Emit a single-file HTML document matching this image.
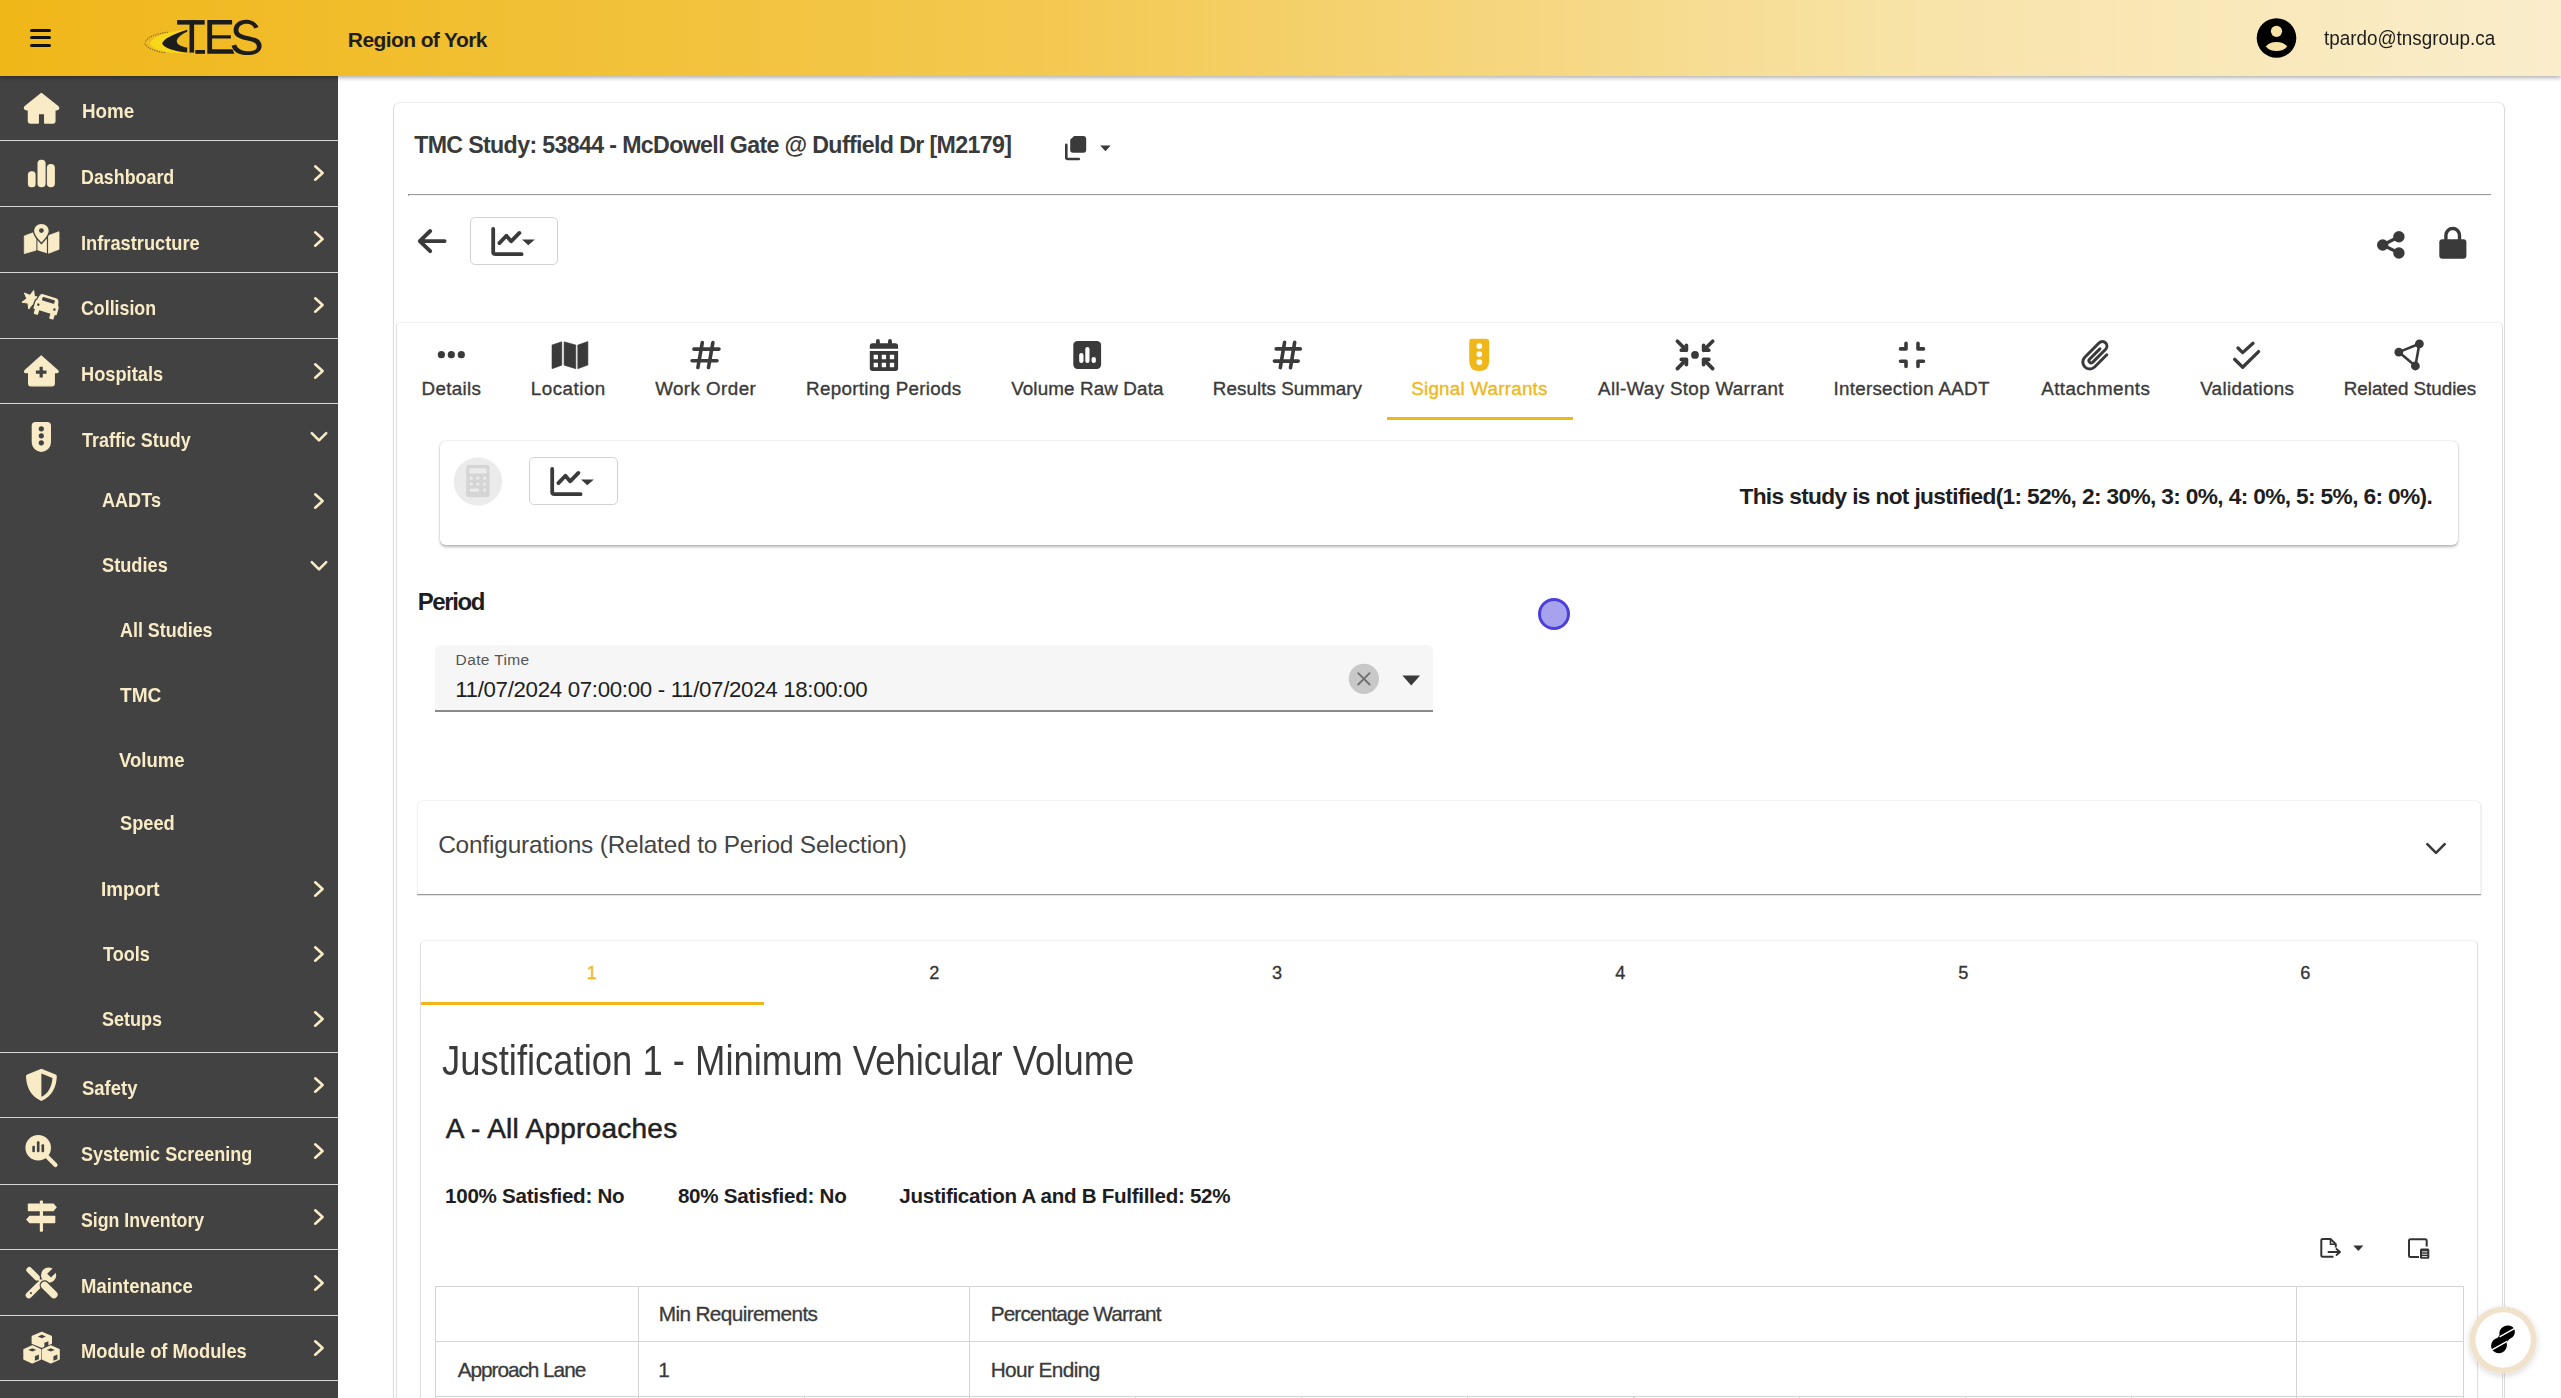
<!DOCTYPE html>
<html><head><meta charset="utf-8">
<style>
*{box-sizing:border-box;margin:0;padding:0}
html,body{width:2561px;height:1398px;overflow:hidden;background:#fff;font-family:"Liberation Sans",sans-serif}
.a{position:absolute}
.t{position:absolute;white-space:nowrap;line-height:1;z-index:20}
svg{position:absolute;overflow:visible}
</style></head><body>
<div class="a" style="left:0;top:0;width:2561px;height:76px;background:linear-gradient(90deg,#F0B719 0%,#F3C84E 40%,#F8E3A8 75%,#FAEDCB 100%);box-shadow:0 1.5px 4px rgba(0,0,0,.3);z-index:10"></div>
<div class="a" style="left:30px;top:29px;width:21px;height:3px;background:#111;border-radius:2px;z-index:11"></div>
<div class="a" style="left:30px;top:36.4px;width:21px;height:3px;background:#111;border-radius:2px;z-index:11"></div>
<div class="a" style="left:30px;top:43.8px;width:21px;height:3px;background:#111;border-radius:2px;z-index:11"></div>
<svg style="left:0;top:0;z-index:11" width="300" height="76" viewBox="0 0 300 76">
<path d="M150,43.5 C152,37.5 163,32 187.2,29.7 C172,34 164,38.5 162.1,43.4 C164,48.5 174,51.5 187.2,53.2 C166,53.5 151.5,49.5 150,43.5 Z" fill="#F8D81A"/>
<path d="M145.5,41.5 C148,37 156,33.5 168,32.3 M144.8,43.5 C147,48.5 155,51.5 166,52.8" stroke="#2a2a2a" stroke-width="1.1" fill="none" stroke-dasharray="1.3 1.1" opacity=".55"/>
<path d="M187.2,29.8 C172,34.5 164,39 162.1,43.4 C164.5,48 174,51 187.2,52.6 L187.2,47.6 C181,46.5 177,44.5 176.8,41.5 C176.8,38.5 180.5,34.5 187.2,31.8 Z" fill="#1c1c1c"/>
<rect x="177.1" y="20.1" width="27.6" height="4.5" fill="#1c1c1c"/>
<rect x="189.5" y="20.1" width="4.6" height="32.5" fill="#1c1c1c"/>
<rect x="195.3" y="50" width="9.7" height="3.8" fill="#1c1c1c"/>
<path d="M207.3,20.1 H232.1 V24.4 H212.1 V35.3 H230.9 V38.6 H212.1 V49.3 H232.5 L234.4,53.8 H207.3 Z" fill="#1c1c1c"/>
<path d="M258.6,27 C256,22 251,19.8 246.5,19.8 C238.5,19.8 233.6,24.2 233.6,30.2 C233.6,36.8 239.5,38.6 246.5,40.2 C253,41.7 256.9,42.8 256.9,46.8 C256.9,50.3 252.8,51.2 247.5,51.2 C241.5,51.2 237.2,48.4 236.2,44.5 L231.6,45.8 C233,51.8 239,55.1 247.5,55.1 C256.5,55.1 261.6,51.2 261.6,46.3 C261.6,39.5 256,37.8 248.5,36.2 C242,34.8 238.4,33.7 238.4,30 C238.4,26 242.3,23.7 246.5,23.7 C250.5,23.7 253.2,25.6 254.3,28.6 Z" fill="#1c1c1c"/>
</svg>
<svg style="left:2256px;top:18px;z-index:11" width="41" height="40" viewBox="0 0 40 40">
<circle cx="20" cy="20" r="19.8" fill="#000"/>
<circle cx="20" cy="13.3" r="5.6" fill="#F7E3A8"/>
<path d="M9.3,28.2 C12,25.5 15.5,24 20,24 C24.5,24 28,25.5 30.7,28.2 C28.5,31.5 24.5,33 20,33 C15.5,33 11.5,31.5 9.3,28.2 Z" fill="#F7E3A8"/>
</svg>
<div class="a" style="left:0;top:76px;width:338px;height:1322px;background:#424242;z-index:5"></div>
<div class="a" style="left:0;top:140px;width:338px;height:1px;background:#d6d6d6;z-index:6"></div>
<div class="a" style="left:0;top:206px;width:338px;height:1px;background:#d6d6d6;z-index:6"></div>
<div class="a" style="left:0;top:272px;width:338px;height:1px;background:#d6d6d6;z-index:6"></div>
<div class="a" style="left:0;top:338px;width:338px;height:1px;background:#d6d6d6;z-index:6"></div>
<div class="a" style="left:0;top:403px;width:338px;height:1px;background:#d6d6d6;z-index:6"></div>
<div class="a" style="left:0;top:1052px;width:338px;height:1px;background:#d6d6d6;z-index:6"></div>
<div class="a" style="left:0;top:1117px;width:338px;height:1px;background:#d6d6d6;z-index:6"></div>
<div class="a" style="left:0;top:1184px;width:338px;height:1px;background:#d6d6d6;z-index:6"></div>
<div class="a" style="left:0;top:1249px;width:338px;height:1px;background:#d6d6d6;z-index:6"></div>
<div class="a" style="left:0;top:1315px;width:338px;height:1px;background:#d6d6d6;z-index:6"></div>
<div class="a" style="left:0;top:1380px;width:338px;height:1px;background:#d6d6d6;z-index:6"></div>
<svg style="left:312px;top:164.3px;z-index:8" width="16" height="18" viewBox="0 0 16 18"><path d="M3.2,2.3 L10.6,9 L3.2,15.7" stroke="#F8EBC6" stroke-width="2.6" fill="none" stroke-linecap="round" stroke-linejoin="round"/></svg>
<svg style="left:312px;top:230.2px;z-index:8" width="16" height="18" viewBox="0 0 16 18"><path d="M3.2,2.3 L10.6,9 L3.2,15.7" stroke="#F8EBC6" stroke-width="2.6" fill="none" stroke-linecap="round" stroke-linejoin="round"/></svg>
<svg style="left:312px;top:296.0px;z-index:8" width="16" height="18" viewBox="0 0 16 18"><path d="M3.2,2.3 L10.6,9 L3.2,15.7" stroke="#F8EBC6" stroke-width="2.6" fill="none" stroke-linecap="round" stroke-linejoin="round"/></svg>
<svg style="left:312px;top:361.8px;z-index:8" width="16" height="18" viewBox="0 0 16 18"><path d="M3.2,2.3 L10.6,9 L3.2,15.7" stroke="#F8EBC6" stroke-width="2.6" fill="none" stroke-linecap="round" stroke-linejoin="round"/></svg>
<svg style="left:312px;top:492.3px;z-index:8" width="16" height="18" viewBox="0 0 16 18"><path d="M3.2,2.3 L10.6,9 L3.2,15.7" stroke="#F8EBC6" stroke-width="2.6" fill="none" stroke-linecap="round" stroke-linejoin="round"/></svg>
<svg style="left:312px;top:880.0px;z-index:8" width="16" height="18" viewBox="0 0 16 18"><path d="M3.2,2.3 L10.6,9 L3.2,15.7" stroke="#F8EBC6" stroke-width="2.6" fill="none" stroke-linecap="round" stroke-linejoin="round"/></svg>
<svg style="left:312px;top:945.0px;z-index:8" width="16" height="18" viewBox="0 0 16 18"><path d="M3.2,2.3 L10.6,9 L3.2,15.7" stroke="#F8EBC6" stroke-width="2.6" fill="none" stroke-linecap="round" stroke-linejoin="round"/></svg>
<svg style="left:312px;top:1010.0px;z-index:8" width="16" height="18" viewBox="0 0 16 18"><path d="M3.2,2.3 L10.6,9 L3.2,15.7" stroke="#F8EBC6" stroke-width="2.6" fill="none" stroke-linecap="round" stroke-linejoin="round"/></svg>
<svg style="left:312px;top:1076.0px;z-index:8" width="16" height="18" viewBox="0 0 16 18"><path d="M3.2,2.3 L10.6,9 L3.2,15.7" stroke="#F8EBC6" stroke-width="2.6" fill="none" stroke-linecap="round" stroke-linejoin="round"/></svg>
<svg style="left:312px;top:1142.2px;z-index:8" width="16" height="18" viewBox="0 0 16 18"><path d="M3.2,2.3 L10.6,9 L3.2,15.7" stroke="#F8EBC6" stroke-width="2.6" fill="none" stroke-linecap="round" stroke-linejoin="round"/></svg>
<svg style="left:312px;top:1208.1px;z-index:8" width="16" height="18" viewBox="0 0 16 18"><path d="M3.2,2.3 L10.6,9 L3.2,15.7" stroke="#F8EBC6" stroke-width="2.6" fill="none" stroke-linecap="round" stroke-linejoin="round"/></svg>
<svg style="left:312px;top:1273.5px;z-index:8" width="16" height="18" viewBox="0 0 16 18"><path d="M3.2,2.3 L10.6,9 L3.2,15.7" stroke="#F8EBC6" stroke-width="2.6" fill="none" stroke-linecap="round" stroke-linejoin="round"/></svg>
<svg style="left:312px;top:1339.0px;z-index:8" width="16" height="18" viewBox="0 0 16 18"><path d="M3.2,2.3 L10.6,9 L3.2,15.7" stroke="#F8EBC6" stroke-width="2.6" fill="none" stroke-linecap="round" stroke-linejoin="round"/></svg>
<svg style="left:310px;top:427.9px;z-index:8" width="18" height="18" viewBox="0 0 18 18"><path d="M1.8,5.2 L9,12.4 L16.2,5.2" stroke="#F8EBC6" stroke-width="2.6" fill="none" stroke-linecap="round" stroke-linejoin="round"/></svg>
<svg style="left:310px;top:556.6px;z-index:8" width="18" height="18" viewBox="0 0 18 18"><path d="M1.8,5.2 L9,12.4 L16.2,5.2" stroke="#F8EBC6" stroke-width="2.6" fill="none" stroke-linecap="round" stroke-linejoin="round"/></svg>
<svg style="left:0;top:0;z-index:8" width="338" height="1398" viewBox="0 0 338 1398">
<!-- home -->
<path d="M41.4,93.5 L25.2,106.6 Q23.5,108.5 26,109.6 L28.5,110 L28.5,121 Q28.5,123 30.5,123 L38.2,123 L38.2,113.5 L44.8,113.5 L44.8,123 L52.8,123 Q54.8,123 54.8,121 L54.8,110 L57.3,109.6 Q59.6,108.5 57.8,106.6 Z" fill="#F8EBC6" stroke="#F8EBC6" stroke-width="1.5" stroke-linejoin="round"/>
<!-- dashboard bars -->
<rect x="27.9" y="171.2" width="7.7" height="16.1" rx="3.5" fill="#F8EBC6"/>
<rect x="37.5" y="159.7" width="8.1" height="27.6" rx="3.8" fill="#F8EBC6"/>
<rect x="46.9" y="163.9" width="8" height="23.4" rx="3.8" fill="#F8EBC6"/>
<!-- infrastructure map + pin -->
<path d="M24.3,236 L34.3,232.3 L36,236 L36,250.2 L24.3,253.6 Z" fill="#F8EBC6" stroke="#F8EBC6" stroke-width=".8" stroke-linejoin="round"/>
<path d="M37.4,238.5 L41.4,244.2 L45.4,238.5 L46.9,238.5 L46.9,253.3 L37.4,250.3 Z" fill="#F8EBC6"/>
<path d="M48.5,235.6 L59,231.7 L59,249.3 L48.5,253.3 Z" fill="#F8EBC6" stroke="#F8EBC6" stroke-width=".8" stroke-linejoin="round"/>
<path d="M41.4,223.2 C46,223.2 49.4,226.6 49.4,230.8 C49.4,235 44.5,240.5 41.4,243.6 C38.3,240.5 33.4,235 33.4,230.8 C33.4,226.6 36.8,223.2 41.4,223.2 Z" fill="#F8EBC6" stroke="#424242" stroke-width="1.4"/>
<circle cx="41.4" cy="230.6" r="2.4" fill="#424242"/>
<!-- collision -->
<path d="M33.68,290.53 L34.45,296.55 L40.47,297.32 L35.64,300.99 L37.99,306.59 L32.39,304.24 L28.72,309.07 L27.95,303.05 L21.93,302.28 L26.76,298.61 L24.41,293.01 L30.01,295.36 Z" fill="#F8EBC6" stroke="#F8EBC6" stroke-width="1" stroke-linejoin="round"/>
<g transform="rotate(17 47 305)">
<path d="M39.5,295.2 L53.5,295.2 Q56.8,295.2 57.6,298.5 L58.6,302.5 Q59.8,303.5 59.8,305.5 L59.8,311.5 Q59.8,313 58.3,313 L58,313 L58,316.2 Q58,318 56.2,318 L54,318 Q52.2,318 52.2,316.2 L52.2,313 L41.8,313 L41.8,316.2 Q41.8,318 40,318 L37.8,318 Q36,318 36,316.2 L36,313 L35.7,313 Q34.2,313 34.2,311.5 L34.2,305.5 Q34.2,303.5 35.4,302.5 L36.4,298.5 Q37.2,295.2 39.5,295.2 Z" fill="#F8EBC6" stroke="#424242" stroke-width="1.3"/>
<rect x="40.6" y="298.3" width="12.8" height="3.6" rx=".8" fill="#424242"/>
<circle cx="38.6" cy="307.2" r="1.25" fill="#424242"/><circle cx="55.4" cy="307.2" r="1.25" fill="#424242"/>
</g>
<!-- hospital -->
<path d="M41.2,356 L25,370.5 Q23.6,372.3 26,372.6 L28.6,372.6 L28.6,383.4 Q28.6,385.8 31,385.8 L51.9,385.8 Q54.3,385.8 54.3,383.4 L54.3,372.6 L57,372.6 Q59.2,372.3 57.6,370.5 Z" fill="#F8EBC6" stroke="#F8EBC6" stroke-width="1.2" stroke-linejoin="round"/>
<path d="M39.6,366.8 H42.8 V370.5 H46.5 V373.7 H42.8 V377.4 H39.6 V373.7 H35.9 V370.5 H39.6 Z" fill="#424242"/>
<!-- traffic light -->
<path d="M35.5,421.9 L47.2,421.9 Q51,421.9 51,425.7 L51,442.3 A9.65,9.65 0 0 1 31.7,442.3 L31.7,425.7 Q31.7,421.9 35.5,421.9 Z" fill="#F8EBC6"/>
<circle cx="41.3" cy="428.8" r="2.6" fill="#424242"/><circle cx="41.3" cy="435.8" r="2.6" fill="#424242"/><circle cx="41.3" cy="442.8" r="2.6" fill="#424242"/>
<!-- safety shield -->
<path d="M41.4,1068.8 L55.6,1074.6 Q56.9,1075.2 56.8,1076.6 C56.5,1087 52,1096.5 41.4,1101 C30.8,1096.5 26.3,1087 26,1076.6 Q25.9,1075.2 27.2,1074.6 Z" fill="#F8EBC6"/>
<path d="M41.4,1073.5 L52.5,1078 C52,1086.5 48.3,1093.5 41.4,1096.8 Z" fill="#424242"/>
<!-- systemic screening -->
<circle cx="38.2" cy="1147.8" r="12.8" fill="#F8EBC6"/>
<path d="M47.5,1157 L55.5,1165" stroke="#F8EBC6" stroke-width="4.2" stroke-linecap="round"/>
<rect x="32.3" y="1145.8" width="2.6" height="6.5" rx="1" fill="#424242"/>
<rect x="36.9" y="1141.2" width="2.6" height="11.1" rx="1" fill="#424242"/>
<rect x="41.5" y="1144.2" width="2.6" height="8.1" rx="1" fill="#424242"/>
<!-- sign inventory -->
<path d="M28.5,1203.5 L53.5,1203.5 L56.8,1207.3 L53.5,1211.2 L28.5,1211.2 Q27.8,1211.2 27.8,1210.5 L27.8,1204.2 Q27.8,1203.5 28.5,1203.5 Z" fill="#F8EBC6"/>
<path d="M29.5,1215.8 L54.5,1215.8 Q55.3,1215.8 55.3,1216.5 L55.3,1222.5 Q55.3,1223.3 54.5,1223.3 L29.5,1223.3 L26.1,1219.5 Z" fill="#F8EBC6"/>
<rect x="39.8" y="1200.6" width="3.2" height="3.5" rx="1" fill="#F8EBC6"/>
<rect x="39.8" y="1210.5" width="3.2" height="6" fill="#F8EBC6"/>
<rect x="39.8" y="1222.5" width="3.2" height="9.2" rx="1" fill="#F8EBC6"/>
<!-- maintenance -->
<circle cx="48.6" cy="1275.2" r="7.6" fill="#F8EBC6"/>
<path d="M47.2,1273.8 L53.8,1267.2 L57.6,1271 L51,1277.6 Z" fill="#424242"/>
<path d="M28.8,1295.3 L41.5,1282.6" stroke="#F8EBC6" stroke-width="6.2" stroke-linecap="round"/>
<circle cx="30.9" cy="1293.1" r="1.05" fill="#424242"/>
<path d="M29.3,1270 L36.8,1277.5" stroke="#424242" stroke-width="8.6" stroke-linecap="round"/>
<path d="M29.3,1270 L36.8,1277.5" stroke="#F8EBC6" stroke-width="6" stroke-linecap="round"/>
<path d="M36.8,1277.5 L44.5,1285.2" stroke="#F8EBC6" stroke-width="2"/>
<path d="M44.6,1285.3 L53.9,1294.6" stroke="#424242" stroke-width="10" stroke-linecap="round"/>
<path d="M44.6,1285.3 L53.9,1294.6" stroke="#F8EBC6" stroke-width="7.4" stroke-linecap="round"/>
<!-- modules cubes -->
<path d="M41.8,1332.6 L51.199999999999996,1336.3999999999999 L51.199999999999996,1343.3 L41.8,1347.1 L32.4,1343.3 L32.4,1336.3999999999999 Z" fill="#F8EBC6" stroke="#F8EBC6" stroke-width="1.6" stroke-linejoin="round"/><path d="M41.8,1334.8 L45.8,1336.5 L41.8,1338.1999999999998 L37.8,1336.5 Z" fill="#424242"/><path d="M44.4,1342.8 L48.4,1341.1999999999998 L48.4,1345.8 L44.4,1347.3999999999999 Z" fill="#424242"/><path d="M32.3,1346.0 L40.5,1349.8 L40.5,1359.0 L32.3,1362.8 L24.099999999999998,1359.0 L24.099999999999998,1349.8 Z" fill="#F8EBC6" stroke="#F8EBC6" stroke-width="1.6" stroke-linejoin="round"/><path d="M32.3,1348.2 L36.3,1349.9 L32.3,1351.6 L28.299999999999997,1349.9 Z" fill="#424242"/><path d="M34.9,1356.2 L38.9,1354.6 L38.9,1359.2 L34.9,1360.8 Z" fill="#424242"/><path d="M50.8,1346.0 L59.0,1349.8 L59.0,1359.0 L50.8,1362.8 L42.599999999999994,1359.0 L42.599999999999994,1349.8 Z" fill="#F8EBC6" stroke="#F8EBC6" stroke-width="1.6" stroke-linejoin="round"/><path d="M50.8,1348.2 L54.8,1349.9 L50.8,1351.6 L46.8,1349.9 Z" fill="#424242"/><path d="M53.4,1356.2 L57.4,1354.6 L57.4,1359.2 L53.4,1360.8 Z" fill="#424242"/>
</svg>
<div class="a" style="left:393px;top:102px;width:2112px;height:1400px;border-left:1px solid #dcdcdc;border-right:1px solid #dcdcdc;border-top:1px solid #efefef;border-radius:7px;background:#fff;box-shadow:0 0 2px rgba(0,0,0,.05);z-index:1"></div>
<svg style="left:1060px;top:132px;z-index:3" width="56" height="32" viewBox="1060 132 56 32">
<path d="M1074,136 L1083.2,136 Q1086.2,136 1086.2,139 L1086.2,150 Q1086.2,152.8 1083.4,152.8 L1073,152.8 Q1070.2,152.8 1070.2,150 L1070.2,139.8 Z" fill="#3a3a3a"/>
<path d="M1066.3,144.8 L1066.3,157.6 Q1066.3,159 1067.7,159 L1078.8,159" stroke="#3a3a3a" stroke-width="2.6" fill="none" stroke-linecap="round"/>
<path d="M1100.2,145.5 L1110.7,145.5 L1105.45,151.3 Z" fill="#3a3a3a"/>
</svg>
<div class="a" style="left:408px;top:194px;width:2083px;height:1px;background:#9a9a9a;z-index:2"></div><div class="a" style="left:408px;top:195px;width:2083px;height:1px;background:#f3f3f3;z-index:2"></div><div class="a" style="left:408px;top:194px;width:1px;height:2px;background:#9a9a9a;z-index:2"></div>
<svg style="left:410px;top:220px;z-index:3" width="44" height="42" viewBox="410 220 44 42">
<path d="M444.6,241.1 L420.5,241.1 M430.2,231 L419.8,241.1 L430.2,251.2" stroke="#3a3a3a" stroke-width="3.9" fill="none" stroke-linecap="round" stroke-linejoin="round"/>
</svg>
<div class="a" style="left:470.2px;top:217.3px;width:87.4px;height:47.3px;border:1.4px solid #d3d3d3;border-radius:5px;background:#fff;z-index:3"></div>
<svg style="left:491.2px;top:226.8px;z-index:4" width="46" height="32" viewBox="0 0 46 32">
<path d="M2.2,1.9 L2.2,25 Q2.2,27.2 4.4,27.2 L30.6,27.2" stroke="#3a3a3a" stroke-width="3.8" fill="none" stroke-linecap="round"/>
<path d="M8.4,16.1 L15.4,8.7 L20.1,14.3 L28.4,5.9" stroke="#3a3a3a" stroke-width="3.8" fill="none" stroke-linecap="round" stroke-linejoin="round"/>
<path d="M31,12.5 L43.8,12.5 L37.3,18.3 Z" fill="#3a3a3a"/>
</svg>
<svg style="left:2370px;top:222px;z-index:3" width="110" height="45" viewBox="2370 222 110 45">
<circle cx="2398.9" cy="236.8" r="5.7" fill="#3a3a3a"/><circle cx="2382.7" cy="245" r="5.7" fill="#3a3a3a"/><circle cx="2398.9" cy="253" r="5.7" fill="#3a3a3a"/>
<path d="M2398.9,236.8 L2382.7,245 L2398.9,253" stroke="#3a3a3a" stroke-width="3.2" fill="none"/>
<path d="M2445.9,240 L2445.9,235.3 A6.8,6.8 0 0 1 2459.5,235.3 L2459.5,240" stroke="#3a3a3a" stroke-width="3.4" fill="none"/>
<rect x="2439.3" y="239.2" width="27.1" height="19.5" rx="3" fill="#3a3a3a"/>
</svg>
<div class="a" style="left:396px;top:322px;width:2107px;height:1100px;border-left:1px solid #dedede;border-right:1px solid #dedede;border-top:1px solid #f1f1f1;border-radius:5px;box-shadow:0 0 2px rgba(0,0,0,.04);z-index:1"></div>
<div class="a" style="left:1387.2px;top:417.2px;width:185.5px;height:2.8px;background:#F0B71B;z-index:3"></div>
<svg style="left:0;top:0;z-index:4" width="2561" height="400" viewBox="0 0 2561 400">
<!-- details dots -->
<circle cx="441.4" cy="354.7" r="3.6" fill="#3a3a3a"/><circle cx="451.3" cy="354.7" r="3.6" fill="#3a3a3a"/><circle cx="461.3" cy="354.7" r="3.6" fill="#3a3a3a"/>
<!-- location map -->
<path d="M552,345 L561.8,341.8 L561.8,365.2 L552,368.7 Z" fill="#3a3a3a" stroke="#3a3a3a" stroke-width=".6" stroke-linejoin="round"/>
<path d="M564.1,341.8 L575.8,345 L575.8,368.7 L564.1,365.2 Z" fill="#3a3a3a" stroke="#3a3a3a" stroke-width=".6" stroke-linejoin="round"/>
<path d="M577.8,345 L587.9,341.5 L587.9,365 L577.8,368.7 Z" fill="#3a3a3a" stroke="#3a3a3a" stroke-width=".6" stroke-linejoin="round"/>
<!-- hashtags -->
<g stroke="#3a3a3a" stroke-width="3.6" stroke-linecap="round">
<path d="M702.3,342.6 L697.9,367.5 M712.9,342.6 L708.5,367.5 M693.9,349.1 L719,349.1 M692.1,360.8 L717,360.8"/>
<path d="M1284.6,342.2 L1280.3,367.6 M1294.7,342.2 L1290.5,367.6 M1276.2,348.9 L1300.3,348.9 M1274.4,361.1 L1298.2,361.1"/>
</g>
<!-- calendar -->
<path d="M872.5,343.3 L895.4,343.3 Q898.1,343.3 898.1,346 L898.1,348.7 L869.8,348.7 L869.8,346 Q869.8,343.3 872.5,343.3 Z" fill="#3a3a3a"/>
<path d="M869.8,351.1 L898.1,351.1 L898.1,368.2 Q898.1,370.9 895.4,370.9 L872.5,370.9 Q869.8,370.9 869.8,368.2 Z" fill="#3a3a3a"/>
<path d="M877.9,340.9 L877.9,344.5 M890,340.9 L890,344.5" stroke="#3a3a3a" stroke-width="3.9" stroke-linecap="round"/>
<g fill="#fff">
<rect x="873.6" y="354.8" width="4.4" height="4.4" rx=".6"/><rect x="881.7" y="354.8" width="4.4" height="4.4" rx=".6"/><rect x="889.8" y="354.8" width="4.4" height="4.4" rx=".6"/>
<rect x="873.6" y="362.8" width="4.4" height="4.4" rx=".6"/><rect x="881.7" y="362.8" width="4.4" height="4.4" rx=".6"/><rect x="889.8" y="362.8" width="4.4" height="4.4" rx=".6"/>
</g>
<!-- square poll -->
<rect x="1073.3" y="341" width="27.8" height="28" rx="4.2" fill="#3a3a3a"/>
<rect x="1079.2" y="353.1" width="4.3" height="10" rx="2.1" fill="#fff"/>
<rect x="1085.3" y="346.9" width="4.2" height="16.2" rx="2.1" fill="#fff"/>
<rect x="1091.6" y="357" width="4.3" height="6.1" rx="2.1" fill="#fff"/>
<!-- traffic light yellow -->
<path d="M1472.2,338.8 L1486.2,338.8 Q1489.2,338.8 1489.2,341.8 L1489.2,361 Q1489.2,371 1479.2,371 Q1469.2,371 1469.2,361 L1469.2,341.8 Q1469.2,338.8 1472.2,338.8 Z" fill="#F0B71B"/>
<circle cx="1479.3" cy="346.1" r="2.9" fill="#fff"/><circle cx="1479.3" cy="354.1" r="2.9" fill="#fff"/><circle cx="1479.3" cy="362.1" r="2.9" fill="#fff"/>
<!-- arrows to dot -->
<circle cx="1695" cy="354.9" r="3.9" fill="#3a3a3a"/>
<g stroke="#3a3a3a" stroke-width="3.7" stroke-linecap="round" stroke-linejoin="round" fill="none">
<path d="M1677.4,341.2 L1686.4,350.2 M1686.4,345.3 L1686.4,350.2 L1681.3,350.2"/>
<path d="M1712.7,341.2 L1703.6,350.2 M1703.6,345.3 L1703.6,350.2 L1708.8,350.2"/>
<path d="M1677.4,368.6 L1686.4,359.4 M1686.4,364.6 L1686.4,359.4 L1681.3,359.4"/>
<path d="M1712.7,368.6 L1703.6,359.4 M1703.6,364.6 L1703.6,359.4 L1708.8,359.4"/>
</g>
<!-- compress -->
<g stroke="#3a3a3a" stroke-width="3.6" stroke-linecap="round" stroke-linejoin="round" fill="none">
<path d="M1906,343.4 L1906,348.9 L1900.5,348.9"/>
<path d="M1918,343.4 L1918,348.9 L1923.5,348.9"/>
<path d="M1900.5,361.2 L1906,361.2 L1906,366.5"/>
<path d="M1923.5,361.2 L1918,361.2 L1918,366.5"/>
</g>
<!-- paperclip -->
<path d="M2106.8,354.8 L2094.6,367 A6.93,6.93 0 0 1 2084.8,357.2 L2099.2,342.8 A4.6,4.6 0 0 1 2105.7,349.3 L2092.6,362.4 A2.2,2.2 0 0 1 2089.5,359.3 L2099.9,348.9" stroke="#3a3a3a" stroke-width="3" fill="none" stroke-linecap="round" stroke-linejoin="round"/>
<!-- double check -->
<g stroke="#3a3a3a" stroke-width="3.3" stroke-linecap="round" stroke-linejoin="round" fill="none">
<path d="M2238,348 L2242.7,352.6 L2253,343.3"/>
<path d="M2234.6,359.3 L2242.7,367.2 L2258.6,351.6"/>
</g>
<!-- related (triangle nodes) -->
<g fill="#3a3a3a"><circle cx="2419.4" cy="343.8" r="4.4"/><circle cx="2398.8" cy="352.1" r="4.4"/><circle cx="2415.4" cy="366" r="4.4"/></g>
<path d="M2419.4,343.8 L2398.8,352.1 L2415.4,366 Z" stroke="#3a3a3a" stroke-width="2.6" fill="none" stroke-linejoin="round"/>
</svg>
<div class="a" style="left:439.6px;top:441.3px;width:2018.6px;height:103.9px;border-radius:6px;background:#fff;box-shadow:0 1.5px 3px rgba(0,0,0,.28),0 0 1.5px rgba(0,0,0,.12);z-index:2"></div>
<svg style="left:453px;top:456px;z-index:3" width="52" height="52" viewBox="453 456 52 52">
<circle cx="477.9" cy="481.5" r="24.2" fill="#ebebeb"/>
<rect x="466.2" y="465" width="23.4" height="32.3" rx="3" fill="#d5d5d5"/>
<rect x="469.2" y="468.3" width="17.4" height="5.2" rx="1" fill="#ebebeb"/>
<circle cx="471.2" cy="478.2" r="1.6" fill="#ebebeb"/><circle cx="477.9" cy="478.2" r="1.6" fill="#ebebeb"/><circle cx="484.6" cy="478.2" r="1.6" fill="#ebebeb"/>
<circle cx="471.2" cy="484.2" r="1.6" fill="#ebebeb"/><circle cx="477.9" cy="484.2" r="1.6" fill="#ebebeb"/><circle cx="484.6" cy="484.2" r="1.6" fill="#ebebeb"/>
<rect x="469.6" y="488.5" width="9.5" height="3.2" rx="1.5" fill="#ebebeb"/><circle cx="484.6" cy="490.1" r="1.6" fill="#ebebeb"/>
</svg>
<div class="a" style="left:529.3px;top:457.1px;width:88.3px;height:48.4px;border:1.4px solid #d3d3d3;border-radius:5px;background:#fff;z-index:3"></div>
<svg style="left:550.3px;top:466.6px;z-index:4" width="46" height="32" viewBox="0 0 46 32">
<path d="M2.2,1.9 L2.2,25 Q2.2,27.2 4.4,27.2 L30.6,27.2" stroke="#3a3a3a" stroke-width="3.8" fill="none" stroke-linecap="round"/>
<path d="M8.4,16.1 L15.4,8.7 L20.1,14.3 L28.4,5.9" stroke="#3a3a3a" stroke-width="3.8" fill="none" stroke-linecap="round" stroke-linejoin="round"/>
<path d="M31,12.5 L43.8,12.5 L37.3,18.3 Z" fill="#3a3a3a"/>
</svg>
<div class="a" style="left:1537.6px;top:598px;width:32px;height:32px;border-radius:50%;background:#A7A2EE;border:3.7px solid #4A3EDC;z-index:3"></div>
<div class="a" style="left:434.9px;top:645.2px;width:997.7px;height:66.6px;background:#f6f6f6;border-radius:6px 6px 0 0;border-bottom:2px solid #8a8a8a;z-index:2"></div>
<svg style="left:1340px;top:655px;z-index:3" width="90" height="45" viewBox="1340 655 90 45">
<circle cx="1363.9" cy="678.8" r="15.1" fill="#c8c8c8"/>
<path d="M1358.2,673.1 L1369.6,684.5 M1369.6,673.1 L1358.2,684.5" stroke="#6e6e6e" stroke-width="1.8" stroke-linecap="round"/>
<path d="M1402.4,675.5 L1420.1,675.5 L1411.25,685.4 Z" fill="#3a3a3a"/>
</svg>
<div class="a" style="left:417px;top:800px;width:2064px;height:94px;border-radius:6px 6px 0 0;background:#fff;border:1px solid #f2f2f2;border-bottom:none;box-shadow:0 1px 0 #9c9c9c,0 2px 1px rgba(0,0,0,.12),1px 1px 1px rgba(0,0,0,.06);z-index:2"></div>
<svg style="left:2420px;top:836px;z-index:3" width="32" height="26" viewBox="2420 836 32 26">
<path d="M2427.3,844.2 L2436,852.9 L2444.7,844.2" stroke="#3a3a3a" stroke-width="2.6" fill="none" stroke-linecap="round" stroke-linejoin="round"/>
</svg>
<div class="a" style="left:420px;top:940px;width:2058px;height:600px;border-left:1px solid #dfdfdf;border-right:1px solid #dfdfdf;border-top:1px solid #f2f2f2;border-radius:5px;box-shadow:0 0 2px rgba(0,0,0,.04);z-index:1"></div>
<div class="a" style="left:420.8px;top:1002.3px;width:343px;height:3.2px;background:#F0B71B;z-index:3"></div>
<svg style="left:2310px;top:1230px;z-index:3" width="130" height="36" viewBox="2310 1230 130 36">
<path d="M2333.5,1256.8 L2322.8,1256.8 Q2321.3,1256.8 2321.3,1255.3 L2321.3,1240.5 Q2321.3,1239 2322.8,1239 L2330.5,1239 L2335.8,1244.3 L2335.8,1247.5" stroke="#333" stroke-width="2" fill="none" stroke-linejoin="round"/>
<path d="M2330.5,1239 L2330.5,1244.3 L2335.8,1244.3" stroke="#333" stroke-width="1.6" fill="none"/>
<path d="M2328.5,1252 L2339.5,1252 M2336.5,1249 L2340,1252 L2336.5,1255" stroke="#333" stroke-width="1.9" fill="none" stroke-linecap="round" stroke-linejoin="round"/>
<path d="M2353.3,1245.5 L2363.4,1245.5 L2358.35,1250.9 Z" fill="#333"/>
<path d="M2419,1257 L2410.5,1257 Q2409,1257 2409,1255.5 L2409,1240.8 Q2409,1239.3 2410.5,1239.3 L2425.2,1239.3 Q2426.7,1239.3 2426.7,1240.8 L2426.7,1246.5" stroke="#333" stroke-width="2" fill="none"/>
<rect x="2420" y="1248.5" width="9.3" height="10.3" rx="1.5" fill="#333"/>
<path d="M2422,1251.8 H2427.3 M2422,1254.2 H2427.3 M2422,1256.6 H2427.3" stroke="#fff" stroke-width=".9"/>
</svg>
<div class="a" style="left:435.1px;top:1285.5px;width:2028.8px;height:1.3px;background:#d4d4d4;z-index:3"></div>
<div class="a" style="left:435.1px;top:1340.6px;width:2028.8px;height:1.3px;background:#d4d4d4;z-index:3"></div>
<div class="a" style="left:435.1px;top:1395.8px;width:2028.8px;height:1.3px;background:#d4d4d4;z-index:3"></div>
<div class="a" style="left:434.5px;top:1285.5px;width:1.3px;height:120px;background:#d4d4d4;z-index:3"></div>
<div class="a" style="left:637.7px;top:1285.5px;width:1.3px;height:120px;background:#d4d4d4;z-index:3"></div>
<div class="a" style="left:968.8px;top:1285.5px;width:1.3px;height:120px;background:#d4d4d4;z-index:3"></div>
<div class="a" style="left:2295.8px;top:1285.5px;width:1.3px;height:120px;background:#d4d4d4;z-index:3"></div>
<div class="a" style="left:2462.8px;top:1285.5px;width:1.3px;height:120px;background:#d4d4d4;z-index:3"></div>
<div class="a" style="left:804.0px;top:1395.8px;width:1.3px;height:10px;background:#d4d4d4;z-index:3"></div>
<div class="a" style="left:1135.1px;top:1395.8px;width:1.3px;height:10px;background:#d4d4d4;z-index:3"></div>
<div class="a" style="left:1300.9px;top:1395.8px;width:1.3px;height:10px;background:#d4d4d4;z-index:3"></div>
<div class="a" style="left:1466.6px;top:1395.8px;width:1.3px;height:10px;background:#d4d4d4;z-index:3"></div>
<div class="a" style="left:1633.4px;top:1395.8px;width:1.3px;height:10px;background:#d4d4d4;z-index:3"></div>
<div class="a" style="left:1798.9px;top:1395.8px;width:1.3px;height:10px;background:#d4d4d4;z-index:3"></div>
<div class="a" style="left:1964.8px;top:1395.8px;width:1.3px;height:10px;background:#d4d4d4;z-index:3"></div>
<div class="a" style="left:2130.7px;top:1395.8px;width:1.3px;height:10px;background:#d4d4d4;z-index:3"></div>
<svg style="left:2455px;top:1292px;z-index:30" width="100" height="100" viewBox="2455 1292 100 100">
<defs><filter id="fs" x="-40%" y="-40%" width="180%" height="180%"><feDropShadow dx="0" dy="2" stdDeviation="3" flood-color="#000" flood-opacity=".16"/></filter></defs>
<circle cx="2503.1" cy="1340" r="33.5" fill="#F0E2CB" filter="url(#fs)"/>
<circle cx="2503.1" cy="1340" r="27.7" fill="#fff"/>
<g fill="#000"><ellipse cx="2507.1" cy="1332.6" rx="8" ry="6.9" transform="rotate(-25 2507.1 1332.6)"/><ellipse cx="2499" cy="1345.5" rx="8" ry="7.6" transform="rotate(-25 2499 1345.5)"/>
<path d="M2501,1333 L2510,1338 L2505,1345 L2496,1340 Z"/></g>
<path d="M2499.5,1336.8 L2516.5,1327.3 M2490.5,1350.6 L2507.5,1341.1" stroke="#fff" stroke-width="1.5"/>
</svg>
<div class="t" style="left:347.85px;top:28.55px;font-size:21px;color:#1e1e1e;font-weight:bold;letter-spacing:-0.602px;">Region of York</div>
<div class="t" style="left:2324.16px;top:27.71px;font-size:20.5px;color:#1e1e1e;transform:scaleX(0.9198);transform-origin:0 0;">tpardo@tnsgroup.ca</div>
<div class="t" style="left:81.57px;top:100.58px;font-size:20.5px;color:#F8EBC6;font-weight:bold;transform:scaleX(0.9159);transform-origin:0 0;z-index:8;">Home</div>
<div class="t" style="left:81.44px;top:166.57px;font-size:20.5px;color:#F8EBC6;font-weight:bold;transform:scaleX(0.8709);transform-origin:0 0;z-index:8;">Dashboard</div>
<div class="t" style="left:81.33px;top:232.77px;font-size:20.5px;color:#F8EBC6;font-weight:bold;transform:scaleX(0.8909);transform-origin:0 0;z-index:8;">Infrastructure</div>
<div class="t" style="left:81.16px;top:298.17px;font-size:20.5px;color:#F8EBC6;font-weight:bold;transform:scaleX(0.8676);transform-origin:0 0;z-index:8;">Collision</div>
<div class="t" style="left:81.16px;top:364.18px;font-size:20.5px;color:#F8EBC6;font-weight:bold;transform:scaleX(0.8901);transform-origin:0 0;z-index:8;">Hospitals</div>
<div class="t" style="left:82.20px;top:429.77px;font-size:20.5px;color:#F8EBC6;font-weight:bold;transform:scaleX(0.8748);transform-origin:0 0;z-index:8;">Traffic Study</div>
<div class="t" style="left:101.58px;top:489.77px;font-size:20.5px;color:#F8EBC6;font-weight:bold;transform:scaleX(0.8820);transform-origin:0 0;z-index:8;">AADTs</div>
<div class="t" style="left:102.07px;top:554.97px;font-size:20.5px;color:#F8EBC6;font-weight:bold;transform:scaleX(0.8881);transform-origin:0 0;z-index:8;">Studies</div>
<div class="t" style="left:119.58px;top:619.97px;font-size:20.5px;color:#F8EBC6;font-weight:bold;transform:scaleX(0.8740);transform-origin:0 0;z-index:8;">All Studies</div>
<div class="t" style="left:119.80px;top:685.18px;font-size:20.5px;color:#F8EBC6;font-weight:bold;transform:scaleX(0.9320);transform-origin:0 0;z-index:8;">TMC</div>
<div class="t" style="left:119.31px;top:749.78px;font-size:20.5px;color:#F8EBC6;font-weight:bold;transform:scaleX(0.9029);transform-origin:0 0;z-index:8;">Volume</div>
<div class="t" style="left:119.87px;top:812.97px;font-size:20.5px;color:#F8EBC6;font-weight:bold;transform:scaleX(0.8890);transform-origin:0 0;z-index:8;">Speed</div>
<div class="t" style="left:101.33px;top:879.37px;font-size:20.5px;color:#F8EBC6;font-weight:bold;transform:scaleX(0.9175);transform-origin:0 0;z-index:8;">Import</div>
<div class="t" style="left:102.60px;top:943.58px;font-size:20.5px;color:#F8EBC6;font-weight:bold;transform:scaleX(0.8804);transform-origin:0 0;z-index:8;">Tools</div>
<div class="t" style="left:101.72px;top:1009.18px;font-size:20.5px;color:#F8EBC6;font-weight:bold;transform:scaleX(0.8788);transform-origin:0 0;z-index:8;">Setups</div>
<div class="t" style="left:81.83px;top:1077.97px;font-size:20.5px;color:#F8EBC6;font-weight:bold;transform:scaleX(0.9012);transform-origin:0 0;z-index:8;">Safety</div>
<div class="t" style="left:80.97px;top:1143.97px;font-size:20.5px;color:#F8EBC6;font-weight:bold;transform:scaleX(0.8789);transform-origin:0 0;z-index:8;">Systemic Screening</div>
<div class="t" style="left:80.97px;top:1210.18px;font-size:20.5px;color:#F8EBC6;font-weight:bold;transform:scaleX(0.8653);transform-origin:0 0;z-index:8;">Sign Inventory</div>
<div class="t" style="left:80.71px;top:1276.18px;font-size:20.5px;color:#F8EBC6;font-weight:bold;transform:scaleX(0.9005);transform-origin:0 0;z-index:8;">Maintenance</div>
<div class="t" style="left:80.71px;top:1341.37px;font-size:20.5px;color:#F8EBC6;font-weight:bold;transform:scaleX(0.8932);transform-origin:0 0;z-index:8;">Module of Modules</div>
<div class="t" style="left:414.14px;top:134.08px;font-size:23.2px;color:#3a3a3a;font-weight:bold;letter-spacing:-0.646px;">TMC Study: 53844 - McDowell Gate @ Duffield Dr [M2179]</div>
<div class="t" style="left:421.58px;top:380.10px;font-size:18.8px;color:#3a3a3a;letter-spacing:0.304px;-webkit-text-stroke:0.35px #3a3a3a;">Details</div>
<div class="t" style="left:530.78px;top:380.10px;font-size:18.8px;color:#3a3a3a;letter-spacing:0.502px;-webkit-text-stroke:0.35px #3a3a3a;">Location</div>
<div class="t" style="left:655.17px;top:380.10px;font-size:18.8px;color:#3a3a3a;letter-spacing:0.441px;-webkit-text-stroke:0.35px #3a3a3a;">Work Order</div>
<div class="t" style="left:806.07px;top:380.10px;font-size:18.8px;color:#3a3a3a;letter-spacing:0.294px;-webkit-text-stroke:0.35px #3a3a3a;">Reporting Periods</div>
<div class="t" style="left:1011.14px;top:380.10px;font-size:18.8px;color:#3a3a3a;letter-spacing:0.145px;-webkit-text-stroke:0.35px #3a3a3a;">Volume Raw Data</div>
<div class="t" style="left:1212.78px;top:380.10px;font-size:18.8px;color:#3a3a3a;letter-spacing:0.073px;-webkit-text-stroke:0.35px #3a3a3a;">Results Summary</div>
<div class="t" style="left:1411.27px;top:380.10px;font-size:18.8px;color:#F0B71B;letter-spacing:0.233px;-webkit-text-stroke:0.35px #F0B71B;">Signal Warrants</div>
<div class="t" style="left:1598.04px;top:380.10px;font-size:18.8px;color:#3a3a3a;letter-spacing:0.337px;-webkit-text-stroke:0.35px #3a3a3a;">All-Way Stop Warrant</div>
<div class="t" style="left:1833.40px;top:380.10px;font-size:18.8px;color:#3a3a3a;letter-spacing:0.291px;-webkit-text-stroke:0.35px #3a3a3a;">Intersection AADT</div>
<div class="t" style="left:2041.23px;top:380.10px;font-size:18.8px;color:#3a3a3a;letter-spacing:0.419px;-webkit-text-stroke:0.35px #3a3a3a;">Attachments</div>
<div class="t" style="left:2200.14px;top:380.10px;font-size:18.8px;color:#3a3a3a;letter-spacing:0.340px;-webkit-text-stroke:0.35px #3a3a3a;">Validations</div>
<div class="t" style="left:2343.78px;top:380.10px;font-size:18.8px;color:#3a3a3a;letter-spacing:-0.014px;-webkit-text-stroke:0.35px #3a3a3a;">Related Studies</div>
<div class="t" style="left:1739.44px;top:484.91px;font-size:22.7px;color:#1e1e1e;font-weight:bold;letter-spacing:-0.641px;">This study is not justified(1: 52%, 2: 30%, 3: 0%, 4: 0%, 5: 5%, 6: 0%).</div>
<div class="t" style="left:417.74px;top:590.40px;font-size:24px;color:#1e1e1e;font-weight:bold;letter-spacing:-1.409px;">Period</div>
<div class="t" style="left:455.60px;top:651.88px;font-size:15.5px;color:#555;letter-spacing:0.368px;">Date Time</div>
<div class="t" style="left:455.21px;top:678.73px;font-size:22.3px;color:#1e1e1e;letter-spacing:-0.331px;">11/07/2024 07:00:00 - 11/07/2024 18:00:00</div>
<div class="t" style="left:438.13px;top:832.66px;font-size:24.4px;color:#444;letter-spacing:-0.167px;">Configurations (Related to Period Selection)</div>
<div class="t" style="left:586.64px;top:964.24px;font-size:18.2px;color:#F0B71B;-webkit-text-stroke:0.3px #F0B71B;">1</div>
<div class="t" style="left:929.32px;top:964.24px;font-size:18.2px;color:#333;-webkit-text-stroke:0.3px #333;">2</div>
<div class="t" style="left:1272.00px;top:964.24px;font-size:18.2px;color:#333;-webkit-text-stroke:0.3px #333;">3</div>
<div class="t" style="left:1615.13px;top:964.24px;font-size:18.2px;color:#333;-webkit-text-stroke:0.3px #333;">4</div>
<div class="t" style="left:1958.32px;top:964.24px;font-size:18.2px;color:#333;-webkit-text-stroke:0.3px #333;">5</div>
<div class="t" style="left:2300.37px;top:964.24px;font-size:18.2px;color:#333;-webkit-text-stroke:0.3px #333;">6</div>
<div class="t" style="left:442.17px;top:1039.50px;font-size:42px;color:#3a3a3a;transform:scaleX(0.8672);transform-origin:0 0;">Justification 1 - Minimum Vehicular Volume</div>
<div class="t" style="left:445.66px;top:1115.00px;font-size:28px;color:#222;letter-spacing:0.250px;-webkit-text-stroke:0.5px #222;">A - All Approaches</div>
<div class="t" style="left:445.07px;top:1186.29px;font-size:20.6px;color:#1e1e1e;font-weight:bold;letter-spacing:-0.277px;">100% Satisfied: No</div>
<div class="t" style="left:677.88px;top:1186.29px;font-size:20.6px;color:#1e1e1e;font-weight:bold;letter-spacing:-0.241px;">80% Satisfied: No</div>
<div class="t" style="left:899.34px;top:1186.29px;font-size:20.6px;color:#1e1e1e;font-weight:bold;letter-spacing:-0.300px;">Justification A and B Fulfilled: 52%</div>
<div class="t" style="left:658.75px;top:1303.97px;font-size:20.8px;color:#3a3a3a;letter-spacing:-0.637px;-webkit-text-stroke:0.3px #3a3a3a;">Min Requirements</div>
<div class="t" style="left:990.64px;top:1303.97px;font-size:20.8px;color:#3a3a3a;letter-spacing:-0.855px;-webkit-text-stroke:0.3px #3a3a3a;">Percentage Warrant</div>
<div class="t" style="left:457.67px;top:1359.57px;font-size:20.8px;color:#3a3a3a;letter-spacing:-1.041px;-webkit-text-stroke:0.3px #3a3a3a;">Approach Lane</div>
<div class="t" style="left:658.23px;top:1359.57px;font-size:20.8px;color:#3a3a3a;-webkit-text-stroke:0.3px #3a3a3a;">1</div>
<div class="t" style="left:990.64px;top:1359.57px;font-size:20.8px;color:#3a3a3a;letter-spacing:-0.587px;-webkit-text-stroke:0.3px #3a3a3a;">Hour Ending</div>
</body></html>
